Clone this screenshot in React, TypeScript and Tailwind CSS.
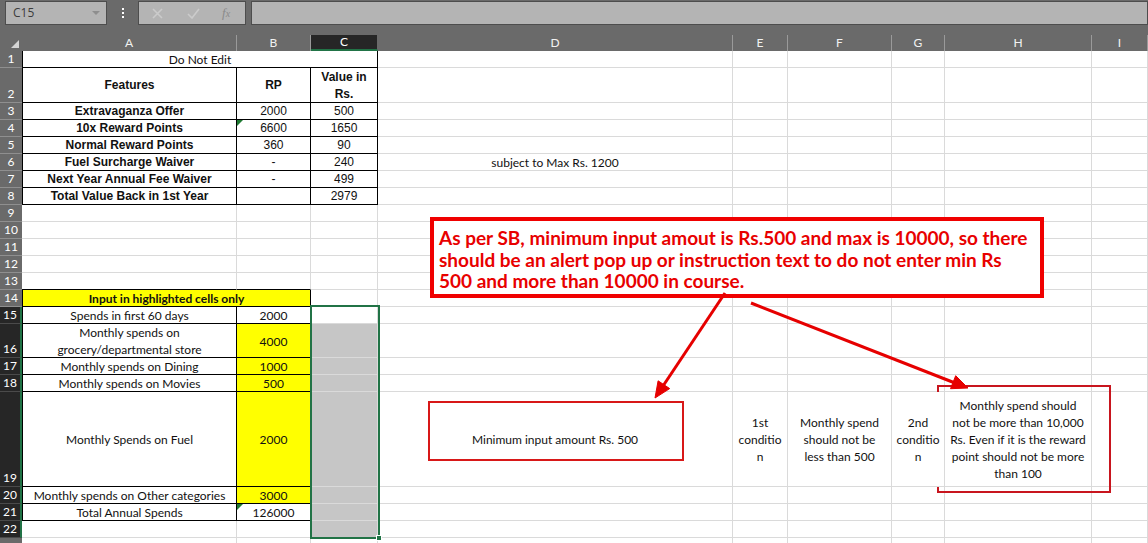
import React from 'react';

const COLS = ['A', 'B', 'C', 'D', 'E', 'F', 'G', 'H', 'I'];
const ROWS = Array.from({ length: 23 }, (_, i) => i + 1);

const CAL = "font-['Lato','Open_Sans',sans-serif] text-[12px]";
const CAL_B = "font-['Lato','Open_Sans',sans-serif] text-[12px] font-bold";
const ARIAL = "font-['Liberation_Sans',Arial,sans-serif] text-[12px]";
const ARIAL_B = "font-['Liberation_Sans',Arial,sans-serif] text-[12px] font-bold";

type Spec = {
  text?: string;
  span?: number;
  lb?: boolean;
  rb?: boolean;
  bb?: boolean;
  bg?: string;
  font?: string;
  tri?: boolean;
  over?: boolean;
};

const features: [string, string, string][] = [
  ['Extravaganza Offer', '2000', '500'],
  ['10x Reward Points', '6600', '1650'],
  ['Normal Reward Points', '360', '90'],
  ['Fuel Surcharge Waiver', '-', '240'],
  ['Next Year Annual Fee Waiver', '-', '499'],
  ['Total Value Back in 1st Year', '', '2979'],
];

const spends: [string, string, boolean][] = [
  ['Spends in first 60 days', '2000', false],
  ['Monthly spends on\ngrocery/departmental store', '4000', true],
  ['Monthly spends on Dining', '1000', true],
  ['Monthly spends on Movies', '500', true],
  ['Monthly Spends on Fuel', '2000', true],
  ['Monthly spends on Other categories', '3000', true],
  ['Total Annual Spends', '126000', false],
];

const specs: Record<string, Spec> = {
  A1: { span: 3, text: 'Do Not Edit', lb: true, rb: true, bb: true },
  A2: { text: 'Features', lb: true, rb: true, bb: true, font: ARIAL_B },
  B2: { text: 'RP', rb: true, bb: true, font: ARIAL_B },
  C2: { text: 'Value in\nRs.', rb: true, bb: true, font: ARIAL_B },
  A13: { bb: true },
  B13: { bb: true },
  A14: { span: 2, text: 'Input in highlighted cells only', lb: true, rb: true, bb: true, bg: 'bg-[#ffff00]', font: CAL_B },
  D6: { text: 'subject to Max Rs. 1200' },
  D19: { text: 'Minimum input amount Rs. 500' },
  E19: { text: '1st\nconditio\nn' },
  F19: { text: 'Monthly spend\nshould not be\nless than 500' },
  G19: { text: '2nd\nconditio\nn', over: true },
  H19: { text: 'Monthly spend should\nnot be more than 10,000\nRs. Even if it is the reward\npoint should not be more\nthan 100' },
};

features.forEach(([a, b, c], i) => {
  const r = i + 3;
  specs[`A${r}`] = { text: a, lb: true, rb: true, bb: true, font: ARIAL_B };
  specs[`B${r}`] = { text: b, rb: true, bb: true, font: ARIAL, tri: r === 4 };
  specs[`C${r}`] = { text: c, rb: true, bb: true, font: ARIAL };
});

spends.forEach(([a, b, yellow], i) => {
  const r = i + 15;
  specs[`A${r}`] = { text: a, lb: true, rb: true, bb: true };
  specs[`B${r}`] = { text: b, rb: true, bb: true, bg: yellow ? 'bg-[#ffff00]' : undefined, tri: r === 21 };
});

for (let r = 16; r <= 22; r++) {
  specs[`C${r}`] = { bg: 'bg-[#c6c6c6]' };
}

const covered = new Set(['B1', 'C1', 'B14']);

const Triangle = () => (
  <svg className="absolute left-0 top-0" width="6" height="6" viewBox="0 0 6 6">
    <polygon points="0,0 6,0 0,6" fill="#1f7a32" />
  </svg>
);

function Cell({ spec }: { spec: Spec }) {
  return (
    <div
      className={`relative flex items-center justify-center text-center border-r border-b pt-px leading-[17px] text-[#111] ${
        spec.over ? 'whitespace-pre z-10' : 'whitespace-pre-line'
      } ${spec.rb ? 'border-r-black' : 'border-r-[#dadada]'} ${spec.bb ? 'border-b-black' : 'border-b-[#dadada]'} ${
        spec.lb ? 'border-l border-l-black' : ''
      } ${spec.span === 3 ? 'col-span-3' : spec.span === 2 ? 'col-span-2' : ''} ${spec.bg ?? 'bg-white'} ${spec.font ?? CAL}`}
    >
      {spec.tri && <Triangle />}
      {spec.text}
    </div>
  );
}

function Toolbar() {
  return (
    <div className="flex h-[35px] items-start pt-px">
      <div className="ml-[5px] flex h-[24px] w-[102px] items-center justify-between border border-[#4d4d4d] bg-[#b4b4b4] pl-[7px] pr-[6px]">
        <span className="font-['Open_Sans',sans-serif] text-[12px] text-[#3c3c3c]">C15</span>
        <svg width="8" height="5" viewBox="0 0 8 5">
          <polygon points="0,0 8,0 4,4" fill="#8e8e8e" />
        </svg>
      </div>
      <div className="flex h-[24px] w-[31px] flex-col items-center justify-center gap-[2px]">
        <span className="h-[2px] w-[2px] bg-white" />
        <span className="h-[2px] w-[2px] bg-white" />
        <span className="h-[2px] w-[2px] bg-white" />
      </div>
      <div className="flex h-[24px] w-[108px] items-center border border-[#4d4d4d] bg-[#b4b4b4]">
        <svg className="ml-[13px]" width="11" height="11" viewBox="0 0 11 11">
          <path d="M1 1 L10 10 M10 1 L1 10" stroke="#cbcbcb" strokeWidth="1.6" />
        </svg>
        <svg className="ml-[24px]" width="13" height="11" viewBox="0 0 13 11">
          <path d="M1 6 L5 10 L12 1" stroke="#cbcbcb" strokeWidth="1.6" fill="none" />
        </svg>
        <span className="ml-[22px] font-['Liberation_Serif',serif] text-[13px] italic text-[#8a8a8a]">
          f<span className="text-[10px]">x</span>
        </span>
      </div>
      <div className="ml-[5px] h-[24px] flex-1 border border-[#4d4d4d] bg-[#b4b4b4]" />
    </div>
  );
}

export default function App() {
  return (
    <div className="relative h-[543px] w-[1148px] overflow-hidden bg-[#6a6a6a]">
      <Toolbar />
      <div className="grid grid-cols-[22px_215px_74px_67px_355px_55px_104px_53px_147px_56px] grid-rows-[16px_17px_35px_17px_17px_17px_17px_17px_17px_17px_17px_17px_17px_17px_17px_17px_34px_17px_17px_95px_17px_17px_17px_17px]">
        <div className="relative bg-[#6a6a6a]">
          <svg className="absolute bottom-[3px] right-[3px]" width="8" height="8" viewBox="0 0 8 8">
            <polygon points="8,0 8,8 0,8" fill="#d4d4d4" />
          </svg>
        </div>
        {COLS.map((c) => (
          <div
            key={c}
            className={`flex items-center justify-center border-r font-['Lato',sans-serif] text-[12px] ${
              c === 'C'
                ? 'border-r-[#6a6a6a] border-b-2 border-b-[#217346] bg-[#262626] text-white'
                : 'border-r-[#9a9a9a] bg-[#6a6a6a] text-[#f2f2f2]'
            }`}
          >
            {c}
          </div>
        ))}
        {ROWS.map((r) => {
          const sel = r >= 15 && r <= 22;
          return (
            <React.Fragment key={r}>
              <div
                className={`flex items-end justify-center border-b pb-[1px] font-['Lato',sans-serif] text-[12px] leading-[14px] text-white ${
                  sel
                    ? 'border-r-2 border-r-[#217346] border-b-[#4a4a4a] bg-[#262626]'
                    : 'border-b-[#8f8f8f] bg-[#6a6a6a]'
                }`}
              >
                {r < 23 ? r : null}
              </div>
              {COLS.filter((c) => !covered.has(`${c}${r}`)).map((c) => (
                <Cell key={c} spec={specs[`${c}${r}`] ?? {}} />
              ))}
            </React.Fragment>
          );
        })}
      </div>

      {/* selection C15:C22 */}
      <div className="absolute left-[310px] top-[305px] h-[234px] w-[70px] border-2 border-[#217346]" />
      <div className="absolute left-[376px] top-[535px] h-[6px] w-[6px] border border-white bg-[#217346]" />

      {/* annotation */}
      <div className="absolute left-[430px] top-[217px] h-[81px] w-[614px] border-4 border-[#f00000] bg-white pl-[5px] pr-[2px] pt-[6px] font-['Lato',sans-serif] text-[19px] font-bold leading-[21.5px] text-[#e80000]">
        As per SB, minimum input amout is Rs.500 and max is 10000, so there should be an alert pop up or instruction text to
        do not enter min Rs 500 and more than 10000 in course.
      </div>
      <div className="absolute left-[428px] top-[401px] h-[60px] w-[256px] border-2 border-[#d81818]" />
      <div className="absolute left-[937px] top-[385px] h-[108px] w-[174px] border-2 border-[#c8151e]" />

      <svg className="pointer-events-none absolute left-0 top-0" width="1148" height="543" viewBox="0 0 1148 543">
        <g stroke="#e60000" strokeWidth="3" fill="#e60000">
          <line x1="725" y1="293" x2="663" y2="386" />
          <polygon points="655,398 669.7,388.6 658.1,380.8" strokeWidth="1" />
          <line x1="751" y1="303" x2="955" y2="383" />
          <polygon points="968,388 950.5,388.7 955.7,375.7" strokeWidth="1" />
        </g>
      </svg>
    </div>
  );
}
